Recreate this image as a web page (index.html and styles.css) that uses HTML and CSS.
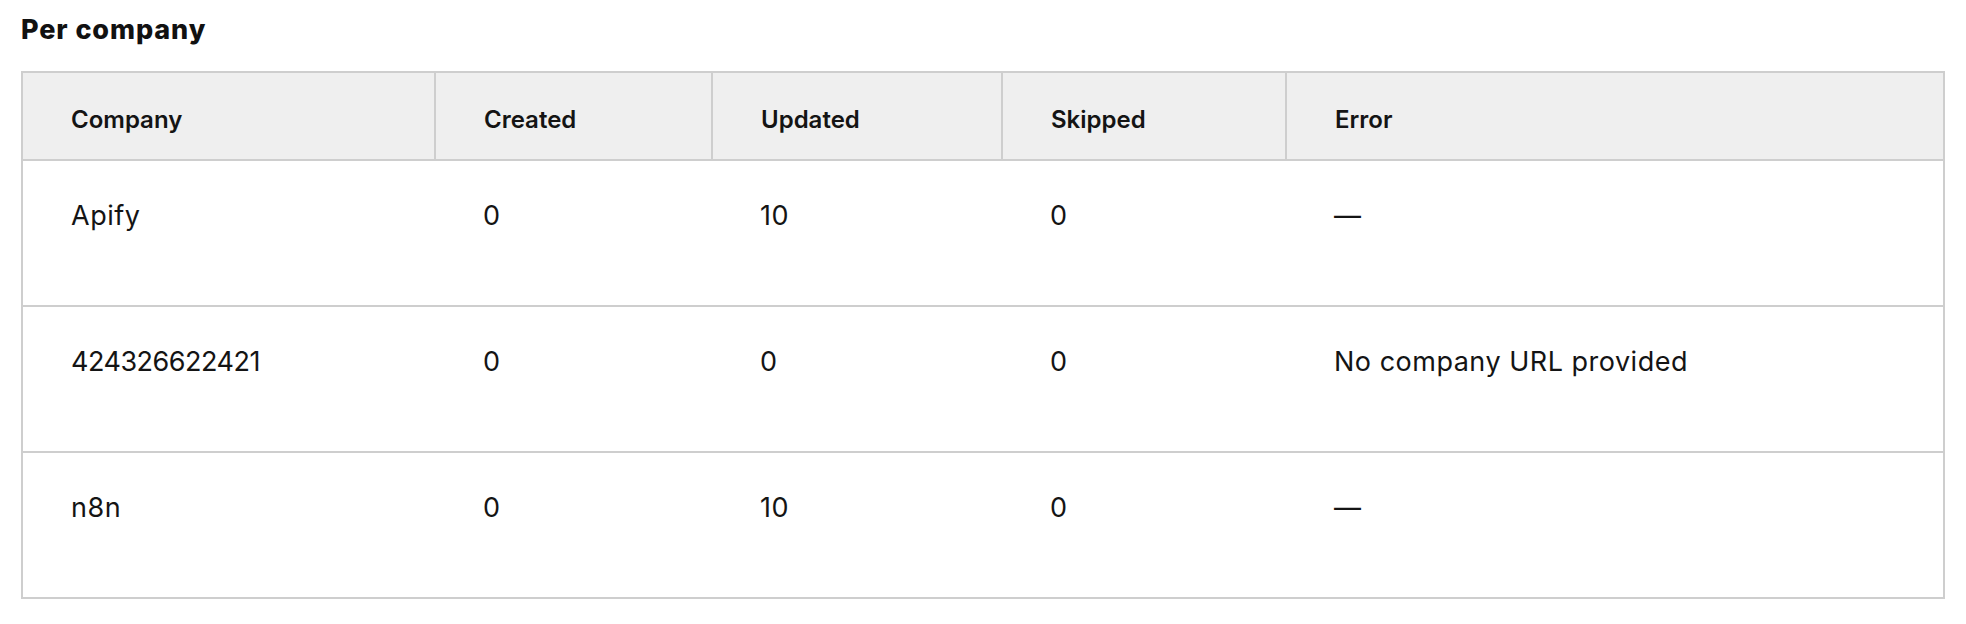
FILE: index.html
```html
<!DOCTYPE html>
<html lang="en">
<head>
<meta charset="utf-8">
<title>Per company</title>
<link rel="stylesheet" href="styles.css">
</head>
<body>
<section class="section">
  <h2 class="section-title">Per company</h2>
  <table class="report">
    <colgroup>
      <col class="c-company">
      <col class="c-created">
      <col class="c-updated">
      <col class="c-skipped">
      <col class="c-error">
    </colgroup>
    <thead>
      <tr>
        <th>Company</th>
        <th>Created</th>
        <th>Updated</th>
        <th>Skipped</th>
        <th>Error</th>
      </tr>
    </thead>
    <tbody>
      <tr>
        <td>Apify</td>
        <td>0</td>
        <td>10</td>
        <td>0</td>
        <td>—</td>
      </tr>
      <tr>
        <td class="id-cell">424326622421</td>
        <td>0</td>
        <td>0</td>
        <td>0</td>
        <td>No company URL provided</td>
      </tr>
      <tr>
        <td>n8n</td>
        <td>0</td>
        <td>10</td>
        <td>0</td>
        <td>—</td>
      </tr>
    </tbody>
  </table>
</section>
</body>
</html>
```

FILE: styles.css
```css
html, body {
  margin: 0;
  padding: 0;
  background: #ffffff;
}

body {
  font-family: Inter, "Liberation Sans", sans-serif;
  color: #141414;
}

.section {
  padding: 13px 21px 0 21px;
}

.section-title {
  margin: 0 0 24px 0;
  font-size: 27px;
  line-height: 34px;
  font-weight: 800;
  letter-spacing: 0.9px;
  color: #111111;
}

.report {
  width: 1924px;
  border-collapse: collapse;
  table-layout: fixed;
  border: 2px solid #cecece;
}

.c-company { width: 413px; }
.c-created { width: 277px; }
.c-updated { width: 290px; }
.c-skipped { width: 284px; }
.c-error { width: auto; }

.report th {
  background: #efefef;
  text-align: left;
  font-size: 24px;
  font-weight: 600;
  line-height: 30px;
  padding: 32px 48px 24px 48px;
  border: 2px solid #cecece;
  vertical-align: top;
}

.report td {
  text-align: left;
  font-size: 27px;
  font-weight: 400;
  letter-spacing: 0.5px;
  line-height: 32px;
  padding: 39px 48px 73px 48px;
  border-top: 2px solid #cecece;
  border-bottom: 2px solid #cecece;
  vertical-align: top;
}

.report td.id-cell {
  letter-spacing: -0.5px;
}
```
